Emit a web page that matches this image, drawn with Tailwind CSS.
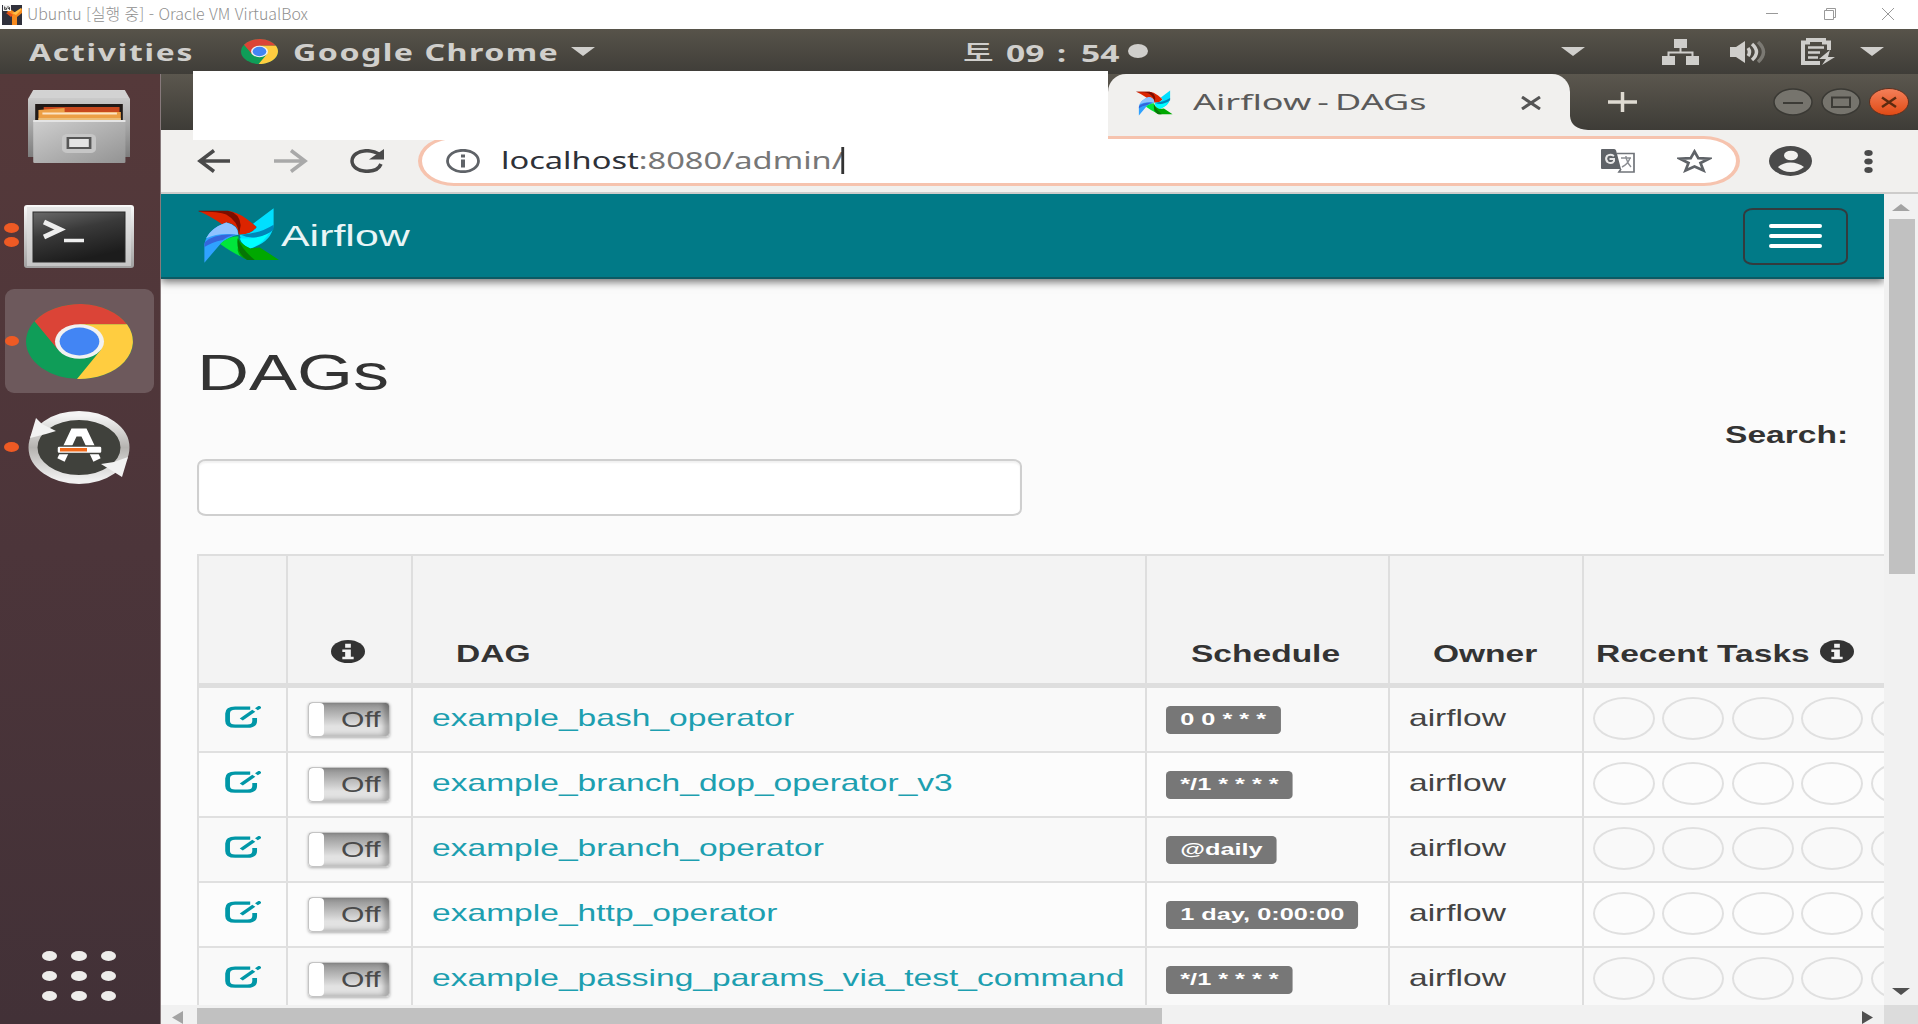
<!DOCTYPE html>
<html lang="ko">
<head>
<meta charset="utf-8">
<title>Ubuntu [실행 중] - Oracle VM VirtualBox</title>
<script src="https://cdn.jsdelivr.net/npm/@tailwindcss/browser@4"></script>
</head>
<body class="w-[1918px] h-[1024px] overflow-hidden bg-white flex flex-col font-['Liberation_Sans','Noto_Sans_CJK_KR',sans-serif] text-[#333]">

<svg class="hidden">
  <defs>
    <symbol id="chrome" viewBox="0 0 48 48" preserveAspectRatio="none">
      <circle cx="24" cy="24" r="24" fill="#0f9d58"/>
      <path fill="#db4437" d="M45.3 13A24 24 0 0 0 3.82 11.05L14.47 29.5 24 24V13Z"/>
      <path fill="#ffcd40" d="M45.3 13A24 24 0 0 1 22.88 47.95L33.53 29.5 24 24V13Z"/>
      <circle cx="24" cy="24" r="11" fill="#f1f1f1"/>
      <circle cx="24" cy="24" r="8.9" fill="#4285f4"/>
    </symbol>
    <symbol id="pinwheel" viewBox="116 86 244 168" preserveAspectRatio="none">
      <path fill="#dc2400" d="M118 98L205 98Q232 100 262 122L291 145Q275 168 238 168Q236 140 205 132L190 138Q150 112 118 98Z"/>
      <path fill="#7c0d00" d="M118 97L205 97Q240 104 243 140L238 166Q236 128 200 108Q180 99 118 99Z"/>
      <path fill="#00dfff" d="M341 90L280 135 291 145Q275 168 240 168Q245 200 272 208Q335 190 341 140Z"/>
      <path fill="#0ff" d="M240 178Q300 182 330 158Q310 195 272 208Q247 200 240 178Z"/>
      <path fill="#0086b8" d="M341 138Q300 164 244 168Q262 178 290 175Q325 168 341 152Z"/>
      <path fill="#2fa2ff" d="M135 250V195Q145 150 200 132Q236 140 236 168Q210 172 182 196Z"/>
      <path fill="#8fc2ff" d="M140 178Q155 148 200 132Q236 140 236 168Q180 160 140 178Z"/>
      <path fill="#3565dc" d="M136 190Q165 163 228 168Q200 174 190 183Q155 190 135 204Z"/>
      <path fill="#00e63c" d="M182 195Q205 172 236 172Q235 200 245 232Q220 222 182 195Z"/>
      <path fill="#00a800" d="M236 176Q240 195 272 208L300 205 357 242H270Q240 238 234 215Z"/>
      <path fill="#067606" d="M234 178Q228 220 262 242H285Q250 215 234 178Z"/>
    </symbol>
    <symbol id="info" viewBox="0 0 24 24" preserveAspectRatio="none">
      <circle cx="12" cy="12" r="12" fill="#333"/>
      <path fill="#f3f3f3" d="M10 4h4v4h-4zM8 10h6v7.500h2V20H8v-2.500h2v-5H8z"/>
    </symbol>
    <symbol id="edit" viewBox="0 0 25 22" preserveAspectRatio="none">
      <path d="M17.500 2.200H7Q1.800 2.200 1.800 7.500V15Q1.800 20.200 7 20.200H15.500Q20.600 20.200 20.600 15V12" fill="none" stroke="#0097a7" stroke-width="3.300"/>
      <path d="M11.300 13.500L20 4.800" stroke="#0097a7" stroke-width="3"/>
      <path d="M21.800 3.200L24.600 .600" stroke="#0097a7" stroke-width="2.800"/>
    </symbol>
    <symbol id="caret" viewBox="0 0 24 9" preserveAspectRatio="none"><path d="M0 0H24L12 9Z" fill="#d0cfcc"/></symbol>
  </defs>
</svg>

<!-- Host window title bar -->
<header class="h-[29px] shrink-0 flex items-center pl-[2px] pr-6 bg-white">
  <svg class="w-5 h-5" viewBox="0 0 20 20">
    <rect width="20" height="20" fill="#30313c"/>
    <path d="M5 7L10 11V20H15V12L20 8V3L14 8 8 4Z" fill="#f58a1f"/>
    <path d="M10 8L14 10 19 5V3L13 7Z" fill="#ffc04a"/>
    <path d="M4 8L9 12 11 10 7 7Z" fill="#e8501a"/>
    <rect x="1" y="0" width="8" height="6" fill="#f2f2f2"/>
    <path d="M2.500 1.500V4.500H4.500V3H3M6 1V3.500H8M7.500 2V5" stroke="#333" stroke-width=".8" fill="none"/>
  </svg>
  <h1 class="ml-[5px] -mt-[3px] text-[15.500px] leading-5 text-[#8f8f8f] whitespace-nowrap font-light font-['Noto_Sans_CJK_KR',sans-serif] origin-left scale-x-[1.025]">Ubuntu [실행 중] - Oracle VM VirtualBox</h1>
  <div class="ml-auto flex items-center gap-[46px] pb-px">
    <svg class="w-3 h-3" viewBox="0 0 12 12"><path d="M0 5.500H12" stroke="#999"/></svg>
    <svg class="w-3 h-3" viewBox="0 0 12 12" fill="none" stroke="#999"><path d="M.5 2.500H9.500V11.500H.5ZM2.500 2.500V.5H11.500V9.500H9.500"/></svg>
    <svg class="w-3 h-3" viewBox="0 0 12 12" stroke="#999"><path d="M0 0L12 12M12 0L0 12"/></svg>
  </div>
</header>

<!-- Guest top panel -->
<nav class="h-[45px] shrink-0 relative flex items-center bg-linear-to-b from-[#57534a] to-[#3f3d38] font-['Noto_Sans','Noto_Sans_CJK_KR',sans-serif] font-bold text-[23px] leading-8 text-[#d0cfcc] whitespace-nowrap">
  <div class="w-[211px] pl-[29px]"><span class="inline-block origin-left scale-x-[1.38] tracking-[1.3px]">Activities</span></div>
  <div class="w-[360px] pl-[30px] flex items-center">
    <svg class="w-[37px] h-[25px]"><use href="#chrome"/></svg>
    <span class="ml-[15px] inline-block origin-left scale-x-[1.4] tracking-[1.050px]">Google Chrome</span>
  </div>
  <svg class="w-6 h-[9px]"><use href="#caret"/></svg>
  <div class="w-[368px]"></div>
  <div class="w-[43px] pt-px text-[23px] font-medium"><span class="inline-block origin-left scale-x-[1.45]">토</span></div>
  <div class="w-[122px] pt-[3px] flex">
    <span class="w-[51px]"><span class="inline-block origin-left scale-x-[1.46]">09</span></span>
    <span class="w-[24px]"><span class="inline-block origin-left scale-x-[1.4]">:</span></span>
    <span class="inline-block origin-left scale-x-[1.46]">54</span>
  </div>
  <span class="w-5 h-[14px] rounded-[50%] bg-[#d0cfcc] -mt-[2px]"></span>
  <div class="ml-auto pr-[34px] flex items-center">
    <svg class="w-6 h-[9px] mr-[77px]"><use href="#caret"/></svg>
    <svg class="w-[37px] h-[26px] mr-[31px]" viewBox="0 0 37 26" fill="#cfcecb"><path d="M12 0h13v9H12zM0 17h13v9H0zM24 17h13v9H24z"/><path d="M18.500 8V13M6.500 18V13.500H30.500V18" fill="none" stroke="#cfcecb" stroke-width="2"/></svg>
    <svg class="w-[37px] h-[24px] mr-[34px]" viewBox="0 0 37 22"><path d="M0 6H6L15 0V22L6 16H0Z" fill="#cfcecb"/><g fill="none" stroke-width="3.500"><path d="M18 7Q21 11 18 15" stroke="#cfcecb"/><path d="M22 3Q31 11 22 19" stroke="#cfcecb"/><path d="M28 1Q39 11 28 21" stroke="#7b7973"/></g></svg>
    <svg class="w-[34px] h-[27px] mr-[25px]" viewBox="0 0 34 27"><path d="M19 25H2V4.500H7V2H23V4.500H28V12" fill="none" stroke="#cfcecb" stroke-width="4"/><path d="M7 9.500H23M7 14.500H19M7 19.500H17" stroke="#cfcecb" stroke-width="2.500"/><path d="M29 12L18 21H25L21 27 34 19H27Z" fill="#cfcecb"/></svg>
    <svg class="w-6 h-[9px]"><use href="#caret"/></svg>
  </div>
</nav>

<div class="flex flex-1 min-h-0 relative">
  <!-- Dock -->
  <aside class="w-[161px] shrink-0 flex flex-col bg-linear-to-b from-[#55393a] via-[#4c353a] to-[#423137] border-r border-[#87797b]">
    <div class="pl-7 pt-4 h-[131px]">
      <svg class="w-[102px] h-[74px]" viewBox="0 0 78 74" preserveAspectRatio="none">
        <defs><linearGradient id="fb" x2="0" y2="1"><stop stop-color="#d4d4d4"/><stop offset="1" stop-color="#7d7d7d"/></linearGradient><linearGradient id="ff" x2="1" y2="1"><stop stop-color="#cfcfcf"/><stop offset="1" stop-color="#939393"/></linearGradient></defs>
        <path d="M4 0H74L78 9V67H0V9Z" fill="url(#fb)"/><path d="M4 1H74L77 8H1Z" fill="#d2d2d2"/>
        <rect x="5.500" y="14" width="67" height="18" fill="#211a17"/>
        <path d="M12 17H70V22H12Z" fill="#c8481d"/><path d="M8 20L28 18V22H71V32H8Z" fill="#ec9f45"/><path d="M11 23.500H68" stroke="#fbe3c4" stroke-width="2"/><path d="M8 28H71V32H8Z" fill="#ebbd78"/>
        <rect x="4" y="30" width="70.500" height="43" rx="1" fill="url(#ff)"/><path d="M4 31H74.500" stroke="#e4e4e4" stroke-width="2"/>
        <rect x="26" y="44" width="26" height="19" rx="4" fill="#c6c6c6"/><rect x="30.500" y="48" width="17" height="10" fill="#e4e4e4" stroke="#565656" stroke-width="2"/>
      </svg>
    </div>
    <div class="h-[64px] pl-1 flex items-center">
      <div class="flex flex-col gap-[4px] mr-[5px] -mt-[4px]"><i class="w-[15px] h-[10px] rounded-[50%] bg-[#ee5a24]"></i><i class="w-[15px] h-[10px] rounded-[50%] bg-[#ee5a24]"></i></div>
      <svg class="w-[110px] h-[64px]" viewBox="0 0 110 64">
        <defs><linearGradient id="tb" x2="0" y2="1"><stop stop-color="#fafafa"/><stop offset="1" stop-color="#a0a0a0"/></linearGradient><linearGradient id="ts" x2=".4" y2="1"><stop stop-color="#6a6a6a"/><stop offset=".45" stop-color="#3a3a3a"/><stop offset="1" stop-color="#1c1c1c"/></linearGradient></defs>
        <rect x="0" y="0" width="110" height="63" rx="3" fill="url(#tb)"/><rect x="3" y="2" width="104" height="59" fill="#dcdcdc" opacity=".6"/>
        <rect x="9" y="7" width="92" height="50" fill="url(#ts)" stroke="#2b2b2b"/>
        <path d="M20 17L36 24.500 20 32" fill="none" stroke="#eee" stroke-width="5"/><path d="M40 35.500H60" stroke="#eee" stroke-width="3.500"/>
      </svg>
    </div>
    <div class="mt-[20px] ml-[5px] w-[149px] h-[104px] rounded-[9px] bg-[#6d595c] flex items-center">
      <i class="w-[14px] h-[10px] rounded-[50%] bg-[#ee5a24]"></i>
      <svg class="ml-[7px] w-[107px] h-[75px]"><use href="#chrome"/></svg>
    </div>
    <div class="mt-[16px] pl-1 h-[76px] flex items-center">
      <i class="w-[15px] h-[10px] rounded-[50%] bg-[#ee5a24]"></i>
      <svg class="ml-[9px] w-[102px] h-[73px]" viewBox="0 0 102 73">
        <defs><linearGradient id="ur" x2="0" y2="1"><stop stop-color="#f4f4f4"/><stop offset=".5" stop-color="#b5b3b0"/><stop offset="1" stop-color="#f0f0f0"/></linearGradient></defs>
        <ellipse cx="51" cy="36.500" rx="46" ry="32" fill="#40413c" stroke="url(#ur)" stroke-width="9"/>
        <path d="M2 27L8 7 14 13 28 20 18 23Z" fill="#f2f2f2"/><path d="M100 46L94 66 86 61 73 53 86 51Z" fill="#f2f2f2"/>
        <path d="M33 49L46 21.500H56L69 49" fill="none" stroke="#fff" stroke-width="8"/>
        <rect x="29" y="35" width="45" height="7.500" rx="2" fill="#fff" stroke="#40413c" stroke-width="1.500"/><rect x="32" y="37" width="27" height="3.500" fill="#f26a1b"/>
      </svg>
    </div>
    <div class="mt-auto mb-[23px] ml-[42px] w-[74px] grid grid-cols-3 gap-x-[14px] gap-y-[10px]">
      <i class="h-[10px] rounded-[50%] bg-[#eeedeb]"></i><i class="h-[10px] rounded-[50%] bg-[#eeedeb]"></i><i class="h-[10px] rounded-[50%] bg-[#eeedeb]"></i>
      <i class="h-[10px] rounded-[50%] bg-[#eeedeb]"></i><i class="h-[10px] rounded-[50%] bg-[#eeedeb]"></i><i class="h-[10px] rounded-[50%] bg-[#eeedeb]"></i>
      <i class="h-[10px] rounded-[50%] bg-[#eeedeb]"></i><i class="h-[10px] rounded-[50%] bg-[#eeedeb]"></i><i class="h-[10px] rounded-[50%] bg-[#eeedeb]"></i>
    </div>
  </aside>

  <!-- Browser window -->
  <main class="flex-1 min-w-0 flex flex-col">
    <div class="h-[56px] shrink-0 flex bg-linear-to-b from-[#5b574e] to-[#3e3c37] pl-[947px]">
      <div class="w-[462px] rounded-t-[18px] bg-[#f1f0ee] flex items-center pl-7 pr-[29px] pt-px font-['Noto_Sans',sans-serif]">
        <svg class="w-[37px] h-[26px]"><use href="#pinwheel"/></svg>
        <span class="ml-[20px] pb-[2px] text-[22.500px] leading-8 text-[#5a5a5a] whitespace-nowrap inline-block origin-left scale-x-[1.6] [word-spacing:-2px]">Airflow - DAGs</span>
        <svg class="ml-auto w-5 h-[14px]" viewBox="0 0 20 14"><path d="M1 1L19 13M19 1L1 13" stroke="#555" stroke-width="3"/></svg>
      </div>
      <svg class="w-[18px] h-[14px] self-end" viewBox="0 0 18 14"><path d="M0 0Q1 13 18 14H0Z" fill="#f1f0ee"/></svg>
      <div class="flex items-center ml-5 flex-1">
        <svg class="w-[29px] h-5" viewBox="0 0 29 20"><path d="M14.500 0V20M0 10H29" stroke="#dfdbd2" stroke-width="3.500"/></svg>
        <div class="ml-auto mr-[9px] flex gap-2">
          <svg class="w-10 h-7" viewBox="0 0 40 28"><ellipse cx="20" cy="14" rx="19" ry="13" fill="#76746d" stroke="#3a3934" stroke-width="1.500"/><path d="M10 15H30" stroke="#3c3b36" stroke-width="2"/></svg>
          <svg class="w-10 h-7" viewBox="0 0 40 28"><ellipse cx="20" cy="14" rx="19" ry="13" fill="#76746d" stroke="#3a3934" stroke-width="1.500"/><rect x="11" y="9.500" width="18" height="9.500" fill="none" stroke="#3c3b36" stroke-width="2"/></svg>
          <svg class="w-10 h-7" viewBox="0 0 40 28"><defs><linearGradient id="cl" x2="0" y2="1"><stop stop-color="#f4805a"/><stop offset="1" stop-color="#e04a14"/></linearGradient></defs><ellipse cx="20" cy="14" rx="19.500" ry="13.500" fill="url(#cl)" stroke="#5a3020" stroke-width="1"/><path d="M13 9.500L27 19M27 9.500L13 19" stroke="#5b2a10" stroke-width="2.500"/></svg>
        </div>
      </div>
    </div>
    <div class="h-[64px] shrink-0 bg-[#f1f0ee] border-b-2 border-[#cdcccb] flex items-center font-['Noto_Sans',sans-serif]">
      <svg class="ml-9 w-[34px] h-6" viewBox="0 0 34 24"><path d="M33 12H3M17 1.500L3 12 17 22.500" fill="none" stroke="#4a4a4a" stroke-width="3.500"/></svg>
      <svg class="ml-[43px] w-[34px] h-6" viewBox="0 0 34 24"><path d="M0 12H31M17 1.500L31 12 17 22.500" fill="none" stroke="#a9a9a9" stroke-width="3.500"/></svg>
      <svg class="ml-[42px] w-[34px] h-6" viewBox="0 0 34 24"><path d="M30 5.500Q24 1.700 17 1.700C8 1.700 2 6.500 2 12S8 22.300 17 22.300Q28 22.300 31 15" fill="none" stroke="#4a4a4a" stroke-width="3.500"/><path d="M34 0V10.500H19Z" fill="#4a4a4a"/></svg>
      <div class="ml-[34px] w-[1322px] h-[50px] rounded-[36px/25px] border-y-[3px] border-x-4 border-[#f6c3ae] bg-white flex items-center pl-6 pr-[24px]">
        <svg class="w-[34px] h-6" viewBox="0 0 34 24"><ellipse cx="17" cy="12" rx="15.500" ry="10.700" fill="none" stroke="#5f6368" stroke-width="2.800"/><path d="M15 5.500h4v3h-4zM15 10.500h4v8h-4z" fill="#5f6368"/></svg>
        <span class="ml-[21px] pb-[2px] text-[23px] leading-8 text-[#777] whitespace-nowrap inline-block origin-left scale-x-[1.418]"><span class="text-[#2e3138]">localhost</span>:8080/admin/<i class="inline-block w-[1.500px] h-[27px] -ml-[1.500px] bg-[#333] align-[-5px]"></i></span>
        <svg class="ml-auto w-[34px] h-6" viewBox="0 0 34 24"><path d="M1 0H13Q15 0 15.500 3L20 20H1Q0 20 0 19V1Q0 0 1 0Z" fill="#5f6368"/><path d="M13 7Q9 4.500 6 7Q4 10 6.500 13Q11 15.500 13 12V10H8.500" fill="none" stroke="#e8e8e8" stroke-width="2"/><path d="M16 4.500H33V23H18L20 20" fill="none" stroke="#70747a" stroke-width="1.700"/><path d="M20 9H30M25 7V9Q27 15 30 18M29 9Q27 15 21 18" stroke="#8a8d92" stroke-width="1.400" fill="none"/></svg>
        <svg class="ml-[42px] w-[35px] h-6" viewBox="0 0 35 24"><path d="M17.500 2.500L21.300 9.200 32 9.700 23.500 14 26.500 21.500 17.500 17.500 8.500 21.500 11.500 14 3 9.700 13.700 9.200Z" fill="none" stroke="#5f6368" stroke-width="2.700"/></svg>
      </div>
      <svg class="ml-[29px] w-[43px] h-[30px]" viewBox="0 0 43 30"><ellipse cx="21.500" cy="15" rx="21.500" ry="15" fill="#4a4a4a"/><ellipse cx="22" cy="9.500" rx="7" ry="4.800" fill="#f1f0ee"/><path d="M9 21Q14 16.500 21.500 16.500T35 21Q29 26 21.500 26T9 21Z" fill="#f1f0ee"/></svg>
      <svg class="ml-[52px] w-[9px] h-[23px]" viewBox="0 0 9 23" fill="#4a4a4a"><ellipse cx="4.500" cy="3" rx="4.200" ry="3"/><ellipse cx="4.500" cy="11.500" rx="4.200" ry="3"/><ellipse cx="4.500" cy="20" rx="4.200" ry="3"/></svg>
    </div>

    <div class="h-[811px] shrink-0 flex">
      <div class="w-[1723px] overflow-hidden bg-[#fbfbfb]">
        <div class="relative h-[85px] bg-[#017a87] border-b-2 border-[#0c5a64] shadow-[0_3px_8px_rgba(0,0,0,0.55)] flex items-center pl-[37px] pr-[36px]">
          <svg class="w-[82px] h-[57px]"><use href="#pinwheel"/></svg>
          <span class="ml-px text-[30px] leading-9 text-[#e9f5f6] inline-block origin-left scale-x-[1.43]">Airflow</span>
          <button class="ml-auto mt-px w-[105px] h-[57px] rounded-[10px/7px] border-2 border-[#333b3e] flex flex-col items-center justify-center gap-[6px]">
            <i class="w-[53px] h-1 rounded-sm bg-white"></i><i class="w-[53px] h-1 rounded-sm bg-white"></i><i class="w-[53px] h-1 rounded-sm bg-white"></i>
          </button>
        </div>
        <div class="pl-9 pt-[64px]">
          <h2 class="h-[60px] text-[49.500px] leading-[60px] inline-block origin-left scale-x-[1.455]">DAGs</h2>
          <div class="h-[36px] mt-[14px] pr-[36px] flex justify-end text-[23.200px] font-bold leading-9"><span class="inline-block origin-right scale-x-[1.446]">Search:</span></div>
          <div class="mt-[6px] w-[825px] h-[57px] rounded-[9px/7px] border-2 border-[#cfcfcf] bg-white shadow-[inset_0_2px_2px_rgba(0,0,0,0.06)]"></div>
          <div class="mt-[38px] w-[1900px] border-l-2 border-t-2 border-[#dedede]">
            <div class="h-[132px] grid grid-cols-[88.500px_125px_734px_243px_194px_1fr] divide-x-2 divide-[#dedede] bg-[#f3f3f3] border-b-[5px] border-[#dedede] text-[23.200px] font-bold leading-8 whitespace-nowrap">
              <div></div>
              <div class="flex items-end justify-center pb-5 pr-[2px]"><svg class="w-[34px] h-[23px]"><use href="#info"/></svg></div>
              <div class="flex items-end pl-[43px] pb-[13px]"><span class="inline-block origin-left scale-x-[1.446]">DAG</span></div>
              <div class="flex items-end justify-center pb-[13px] pr-[3px]"><span class="inline-block scale-x-[1.446]">Schedule</span></div>
              <div class="flex items-end justify-center pb-[13px] pr-px"><span class="inline-block scale-x-[1.446]">Owner</span></div>
              <div class="flex items-end pl-[12px] pb-[13px]"><span class="w-[224px]"><span class="inline-block origin-left scale-x-[1.446]">Recent Tasks</span></span><svg class="mb-[7px] w-[34px] h-[23px]"><use href="#info"/></svg></div>
            </div>
            <div id="rows"></div>
          </div>
        </div>
      </div>
      <div class="w-[34px] bg-[#f1f1f1] flex flex-col items-center pt-[10px] pb-[10px]">
        <svg class="w-[18px] h-[7px]" viewBox="0 0 18 7"><path d="M9 0L18 7H0Z" fill="#a3a3a3"/></svg>
        <div class="mt-2 ml-[2px] w-[26px] h-[355px] bg-[#c1c1c1]"></div>
        <svg class="mt-auto w-[18px] h-[7px]" viewBox="0 0 18 7"><path d="M9 7L18 0H0Z" fill="#505050"/></svg>
      </div>
    </div>
    <div class="h-[19px] shrink-0 flex bg-[#f1f1f1]">
      <svg class="ml-[11px] mt-[6px] w-[11px] h-[13px]" viewBox="0 0 11 13"><path d="M11 0V13L0 6.500Z" fill="#a3a3a3"/></svg>
      <div class="ml-[14px] mt-[3px] w-[965px] bg-[#c1c1c1]"></div>
      <svg class="ml-auto mr-[11px] mt-[6px] w-[11px] h-[13px]" viewBox="0 0 11 13"><path d="M0 0V13L11 6.500Z" fill="#505050"/></svg>
      <div class="w-[34px] bg-[#dcdcdc]"></div>
    </div>
  </main>
  <!-- Blank panel over the tab strip -->
  <div class="absolute left-[193px] -top-[3px] w-[915px] h-[69px] bg-white"></div>
</div>

<script>
const dags = [
  ['example_bash_operator', '0 0 * * *'],
  ['example_branch_dop_operator_v3', '*/1 * * * *'],
  ['example_branch_operator', '@daily'],
  ['example_http_operator', '1 day, 0:00:00'],
  ['example_passing_params_via_test_command', '*/1 * * * *'],
];
document.getElementById('rows').innerHTML = dags.map(([name, schedule]) => `
  <div class="h-[65.1px] grid grid-cols-[88.500px_125px_734px_243px_194px_1fr] divide-x-2 divide-[#dedede] odd:bg-[#f9f9f9] even:bg-[#fcfcfc] border-b-2 border-[#e0e0e0] text-[23.200px] leading-8 whitespace-nowrap">
    <div class="pl-[26px] pt-[18px]"><svg class="w-9 h-[22px]"><use href="#edit"/></svg></div>
    <div class="pl-5 pt-[14px]">
      <div class="w-[82px] h-[35px] rounded-[4px] border border-[#c4c4c4] bg-linear-to-b from-[#8f8f8f] to-[#e2e2e2] to-70% shadow-[0_1px_3px_rgba(0,0,0,0.3),inset_-5px_-1px_5px_rgba(0,0,0,0.25)] flex">
        <div class="w-[15px] h-[33px] rounded-[4px] bg-white"></div>
        <span class="ml-[17px] pt-px text-[21.500px] leading-[33px] text-[#4a4a4a] inline-block origin-left scale-x-[1.4]">Off</span>
      </div>
    </div>
    <div class="pl-[19px] pt-[14px] text-[#1d9fb0]"><span class="inline-block origin-left scale-x-[1.448]">${name}</span></div>
    <div class="pl-[19px] pt-[18px]"><span class="block w-max h-7 px-[9.800px] rounded-[3px/4px] bg-[#777] text-white text-[17.400px] leading-[27px] font-bold origin-left scale-x-[1.455]">${schedule}</span></div>
    <div class="pl-[19px] pt-[14px] text-[#444]"><span class="inline-block origin-left scale-x-[1.446]">airflow</span></div>
    <div class="pl-[9px] pt-[9px] flex gap-[7.600px]">${'<i class="shrink-0 w-[62px] h-[43px] rounded-[50%] border-2 border-[#e0e0e0]"></i>'.repeat(6)}</div>
  </div>`).join('');
</script>
</body>
</html>
